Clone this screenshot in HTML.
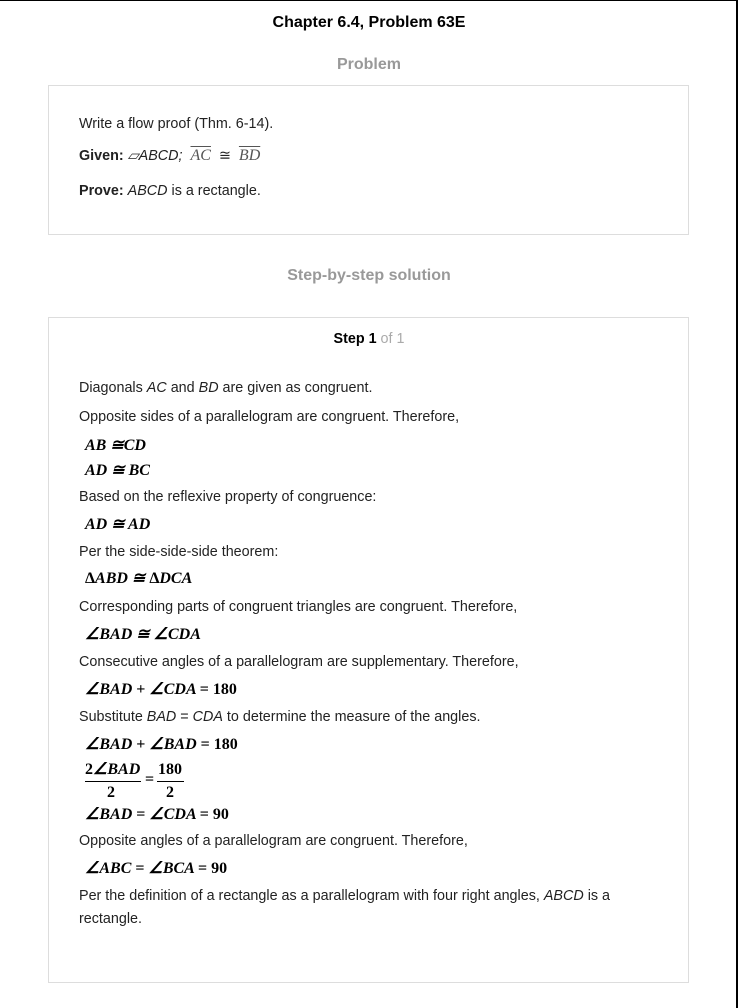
<!DOCTYPE html>
<html><head><meta charset="utf-8"><style>
body{margin:0;width:738px;height:1008px;position:relative;background:#fff;font-family:"Liberation Sans",sans-serif;color:#222;overflow:hidden}
.frame{position:absolute;left:0;top:0;width:738px;height:1008px;border-top:1px solid #000;border-right:2px solid #000;box-sizing:border-box}
.t{position:absolute;font-size:14.35px;white-space:nowrap;line-height:16px}
.m{position:absolute;font-family:"Liberation Serif",serif;font-weight:bold;font-style:italic;font-size:16px;white-space:nowrap;line-height:18px;color:#000}
.m b{font-style:normal}
.box{position:absolute;border:1px solid #ddd;box-sizing:border-box}
h1{position:absolute;margin:0;width:738px;text-align:center;font-size:16px;font-weight:bold;top:14px;color:#000}
.h2{position:absolute;width:738px;text-align:center;font-size:16px;font-weight:bold;color:#999}
.ov{text-decoration:overline;font-family:"Liberation Serif",serif;font-style:italic;color:#555;font-size:16px}
</style></head><body>
<div class="frame"></div>
<h1>Chapter 6.4, Problem 63E</h1>
<div class="h2" style="top:56px">Problem</div>
<div class="box" style="left:48px;top:85px;width:641px;height:150px"></div>
<div class="t" style="left:79px;top:116px">Write a flow proof (Thm. 6-14).</div>
<div class="t" style="left:79px;top:148px"><b>Given:</b> <i>▱ABCD;</i> &nbsp;<span class="ov">AC</span> &nbsp;≅ &nbsp;<span class="ov">BD</span></div>
<div class="t" style="left:79px;top:183px"><b>Prove:</b> <i>ABCD</i> is a rectangle.</div>
<div class="h2" style="top:267px">Step-by-step solution</div>
<div class="box" style="left:48px;top:317px;width:641px;height:666px"></div>
<div class="t" style="left:0;width:738px;text-align:center;top:331px"><b style="color:#000">Step 1</b> <span style="color:#aaa">of 1</span></div>
<div class="t" style="left:79px;top:380px">Diagonals <i>AC</i> and <i>BD</i> are given as congruent.</div>
<div class="t" style="left:79px;top:409px">Opposite sides of a parallelogram are congruent. Therefore,</div>
<div class="m" style="left:85px;top:437px">AB ≅CD</div>
<div class="m" style="left:85px;top:462px">AD ≅ BC</div>
<div class="t" style="left:79px;top:489px">Based on the reflexive property of congruence:</div>
<div class="m" style="left:85px;top:516px">AD ≅ AD</div>
<div class="t" style="left:79px;top:544px">Per the side-side-side theorem:</div>
<div class="m" style="left:85px;top:570px"><b>Δ</b>ABD ≅ <b>Δ</b>DCA</div>
<div class="t" style="left:79px;top:599px">Corresponding parts of congruent triangles are congruent. Therefore,</div>
<div class="m" style="left:85px;top:626px">∠BAD ≅ ∠CDA</div>
<div class="t" style="left:79px;top:654px">Consecutive angles of a parallelogram are supplementary. Therefore,</div>
<div class="m" style="left:85px;top:681px">∠BAD <b>+</b> ∠CDA <b>= 180</b></div>
<div class="t" style="left:79px;top:709px">Substitute <i>BAD</i> = <i>CDA</i> to determine the measure of the angles.</div>
<div class="m" style="left:85px;top:736px">∠BAD <b>+</b> ∠BAD <b>= 180</b></div>
<div class="m" style="left:85px;top:761px"><b>2</b>∠BAD</div>
<div style="position:absolute;left:85px;top:781px;width:56px;border-top:1px solid #000"></div>
<div class="m" style="left:107px;top:784px"><b>2</b></div>
<div class="m" style="left:145px;top:771px"><b>=</b></div>
<div class="m" style="left:158px;top:761px"><b>180</b></div>
<div style="position:absolute;left:157px;top:781px;width:27px;border-top:1px solid #000"></div>
<div class="m" style="left:166px;top:784px"><b>2</b></div>
<div class="m" style="left:85px;top:806px">∠BAD <b>=</b> ∠CDA <b>= 90</b></div>
<div class="t" style="left:79px;top:833px">Opposite angles of a parallelogram are congruent. Therefore,</div>
<div class="m" style="left:85px;top:860px">∠ABC <b>=</b> ∠BCA <b>= 90</b></div>
<div class="t" style="left:79px;top:888px">Per the definition of a rectangle as a parallelogram with four right angles, <i>ABCD</i> is a</div>
<div class="t" style="left:79px;top:911px">rectangle.</div>
</body></html>
